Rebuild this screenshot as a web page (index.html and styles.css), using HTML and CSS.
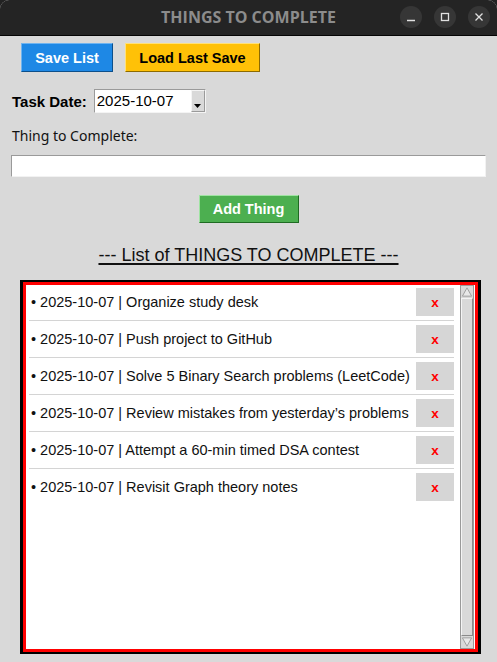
FILE: index.html
```html
<!DOCTYPE html>
<html>
<head>
<meta charset="utf-8">
<link rel="stylesheet" href="styles.css">
</head>
<body>
<div class="window">
  <header class="titlebar">
    <span class="title">THINGS TO COMPLETE</span>
    <div class="wm">
      <span class="wm-btn"><svg width="22" height="22" viewBox="0 0 22 22"><path d="M7 14.5h8" stroke="#e0e0e0" stroke-width="1.3"/></svg></span>
      <span class="wm-btn"><svg width="22" height="22" viewBox="0 0 22 22"><rect x="7.5" y="7.5" width="7" height="7" fill="none" stroke="#e0e0e0" stroke-width="1.3"/></svg></span>
      <span class="wm-btn"><svg width="22" height="22" viewBox="0 0 22 22"><path d="M7.5 7.5l7 7M14.5 7.5l-7 7" stroke="#e0e0e0" stroke-width="1.3"/></svg></span>
    </div>
  </header>
  <main class="app">
    <div class="top-buttons">
      <button class="btn btn-blue">Save List</button>
      <button class="btn btn-yellow">Load Last Save</button>
    </div>
    <div class="date-row">
      <span class="date-label">Task Date:</span>
      <div class="combo">
        <span class="combo-text">2025-10-07</span>
        <span class="combo-arrow"><svg width="8" height="5" viewBox="0 0 8 5"><path d="M0 0h7l-3.5 4z" fill="#000"/></svg></span>
      </div>
    </div>
    <div class="thing-label">Thing to Complete:</div>
    <div class="entry"></div>
    <div class="add-wrap"><button class="btn btn-green">Add Thing</button></div>
    <h2 class="list-heading">--- List of THINGS TO COMPLETE ---</h2>
    <div class="frame-outer">
      <div class="frame-inner">
        <ul class="tasks">
          <li class="task"><span class="task-text">• 2025-10-07 | Organize study desk</span><button class="del">x</button></li>
          <li class="task"><span class="task-text">• 2025-10-07 | Push project to GitHub</span><button class="del">x</button></li>
          <li class="task"><span class="task-text">• 2025-10-07 | Solve 5 Binary Search problems (LeetCode)</span><button class="del">x</button></li>
          <li class="task"><span class="task-text">• 2025-10-07 | Review mistakes from yesterday’s problems</span><button class="del">x</button></li>
          <li class="task"><span class="task-text">• 2025-10-07 | Attempt a 60-min timed DSA contest</span><button class="del">x</button></li>
          <li class="task"><span class="task-text">• 2025-10-07 | Revisit Graph theory notes</span><button class="del">x</button></li>
        </ul>
        <div class="scrollbar">
          <span class="sb-arrow"><svg width="13" height="12" viewBox="0 0 13 12"><path d="M6.5 1.5L11.5 10.5H1.5z" fill="#e8e8e8" stroke="#9a9a9a"/></svg></span>
          <span class="sb-thumb"></span>
          <span class="sb-arrow"><svg width="13" height="12" viewBox="0 0 13 12"><path d="M6.5 10.5L11.5 1.5H1.5z" fill="#e8e8e8" stroke="#9a9a9a"/></svg></span>
        </div>
      </div>
    </div>
  </main>
</div>
</body>
</html>
```

FILE: styles.css
```css
html, body {
  margin: 0;
  padding: 0;
  background: #222;
}
.window {
  width: 497px;
  height: 662px;
  display: flex;
  flex-direction: column;
  background: #d9d9d9;
  border-radius: 9px 9px 0 0;
  overflow: hidden;
}
.titlebar {
  height: 35px;
  flex: none;
  background: #242424;
  border-bottom: 1px solid #050505;
  display: flex;
  align-items: center;
  justify-content: center;
  position: relative;
}
.title {
  font-family: "Open Sans", "Noto Sans", sans-serif;
  font-weight: 700;
  font-size: 16px;
  color: #8c8c8c;
  margin-top: -1px;
}
.wm {
  position: absolute;
  right: 7px;
  top: 6px;
  display: flex;
  gap: 12px;
}
.wm-btn {
  width: 22px;
  height: 22px;
  border-radius: 50%;
  background: #363636;
  display: flex;
}
.app {
  flex: 1;
  display: flex;
  flex-direction: column;
  font-family: "Liberation Sans", Arial, sans-serif;
  color: #000;
}
.top-buttons {
  display: flex;
  gap: 12px;
  margin: 7px 0 0 21px;
}
.btn {
  font-family: "Liberation Sans", Arial, sans-serif;
  font-weight: 700;
  font-size: 14.5px;
  height: 29px;
  padding: 0 13px;
  border: 1px solid;
  cursor: default;
}
.btn-blue {
  width: 92px;
  background: #1e88e5;
  color: #fff;
  border-color: #6fb4f0 #0d4f8a #0d4f8a #6fb4f0;
}
.btn-yellow {
  width: 135px;
  background: #ffc107;
  color: #000;
  border-color: #ffe17a #8c6a00 #8c6a00 #ffe17a;
}
.btn-green {
  width: 100px;
  height: 28px;
  background: #4caf50;
  color: #fff;
  border-color: #9fe3a2 #1f6b23 #1f6b23 #9fe3a2;
}
.date-row {
  display: flex;
  align-items: center;
  margin: 17px 0 0 12px;
  height: 24px;
}
.date-label {
  font-weight: 700;
  font-size: 15px;
  margin-right: 7px;
}
.combo {
  width: 112px;
  height: 24px;
  box-sizing: border-box;
  background: #fff;
  border: 1px solid;
  border-color: #9a9a9a #f4f4f4 #f4f4f4 #9a9a9a;
  display: flex;
}
.combo-text {
  flex: 1;
  font-size: 15px;
  line-height: 22px;
  padding-left: 2px;
}
.combo-arrow {
  width: 14px;
  background: #d9d9d9;
  border: 1px solid;
  border-color: #f4f4f4 #9a9a9a #9a9a9a #f4f4f4;
  display: flex;
  align-items: flex-end;
  justify-content: center;
  padding-bottom: 2px;
  box-sizing: border-box;
}
.thing-label {
  font-family: "Noto Sans", "Open Sans", sans-serif;
  font-size: 14px;
  color: #111;
  margin: 13px 0 0 12px;
  line-height: 20px;
}
.entry {
  margin: 9px 11px 0 11px;
  height: 22px;
  box-sizing: border-box;
  background: #fff;
  border: 1px solid;
  border-color: #9a9a9a #f2f2f2 #f2f2f2 #9a9a9a;
}
.add-wrap {
  display: flex;
  justify-content: center;
  margin-top: 18px;
}
.list-heading {
  margin: 21px 0 0 0;
  text-align: center;
  font-weight: 400;
  font-size: 18px;
  line-height: 22px;
  text-decoration: underline;
  text-decoration-thickness: 2px;
  text-underline-offset: 2px;
  color: #111;
}
.frame-outer {
  margin: 14px 16px 0 20px;
  height: 374px;
  box-sizing: border-box;
  border: 3px solid #000;
  border-top-width: 2px;
  border-bottom-width: 2px;
}
.frame-inner {
  height: 100%;
  box-sizing: border-box;
  border: 3px solid #ff0000;
  background: #fff;
  display: flex;
}
.tasks {
  list-style: none;
  margin: 0;
  padding: 1px 6px 0 3px;
  flex: 1;
}
.task {
  display: flex;
  align-items: center;
  justify-content: space-between;
  height: 28px;
  padding: 2px 0 4px;
  margin-bottom: 2px;
  border-bottom: 1px solid #d4d4d4;
}
.task:last-child {
  border-bottom-color: transparent;
}
.task-text {
  font-size: 14.5px;
  color: #111;
  padding-left: 2px;
}
.del {
  width: 38px;
  height: 28px;
  background: #d6d6d6;
  border: none;
  color: #ff0000;
  font-family: "Liberation Sans", Arial, sans-serif;
  font-weight: 700;
  font-size: 13.5px;
  padding: 0;
}
.scrollbar {
  width: 14px;
  margin: 0 1px 0 0;
  box-sizing: border-box;
  border: 1px solid #9a9a9a;
  background: #d9d9d9;
  display: flex;
  flex-direction: column;
}
.sb-arrow {
  height: 12px;
  display: flex;
  flex: none;
}
.sb-thumb {
  flex: 1;
  border: 1px solid;
  border-color: #f4f4f4 #8a8a8a #8a8a8a #f4f4f4;
  background: #d9d9d9;
}
```
